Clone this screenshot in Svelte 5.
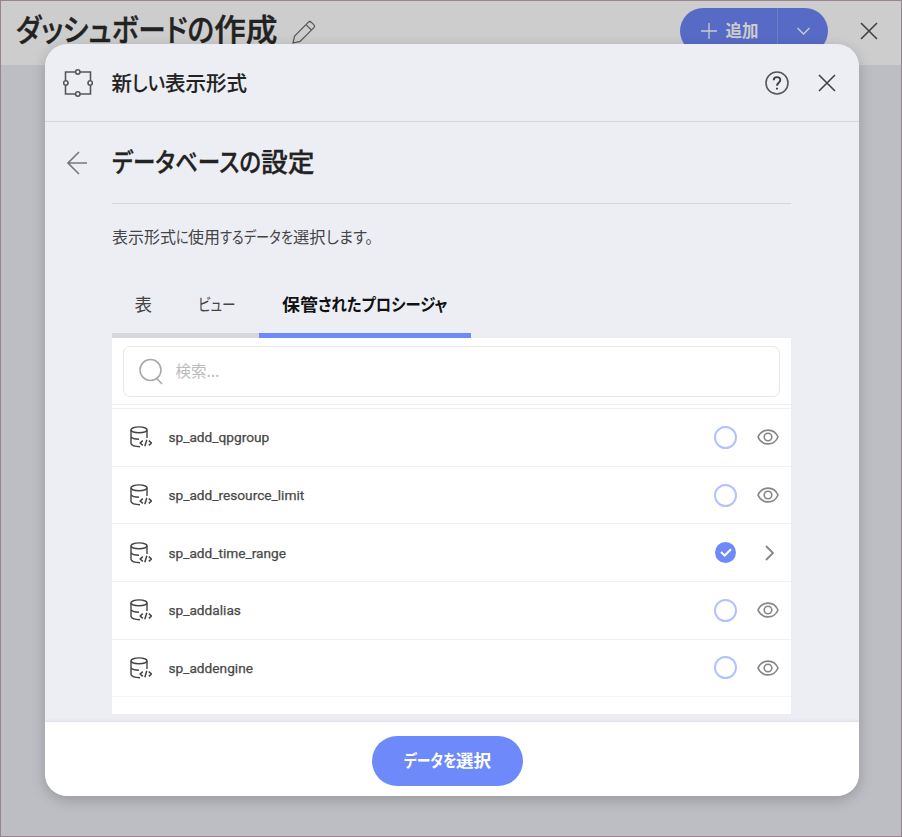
<script>
  const procedures = [
    { name: 'sp_add_qpgroup' },
    { name: 'sp_add_resource_limit' },
    { name: 'sp_add_time_range', selected: true },
    { name: 'sp_addalias' },
    { name: 'sp_addengine' }
  ];

  function fit(node, width) {
    const natural = node.getBoundingClientRect().width;
    node.style.transform = `scaleX(${width / natural})`;
    node.style.marginRight = `${width - natural}px`;
  }
</script>

{#snippet cross()}
  <svg width="18" height="18" viewBox="0 0 18 18"><path d="M1 1 17 17M17 1 1 17" /></svg>
{/snippet}

{#snippet label(runs)}
  <span class="label">{#each runs as [text, width]}<span class="run" use:fit={width}>{text}</span>{/each}</span>
{/snippet}

<div class="app">
  <header class="topbar">
    <h1>{@render label([['ダッシュボードの', 198], ['作成', 63.5]])}</h1>
    <svg class="pencil" width="24" height="24" viewBox="0 0 24 24"><path d="M1 23l1.600-7L16.200 2.300q1.600-1.600 3.200 0l2.300 2.300q1.600 1.600 0 3.200L8.100 21.400ZM14 4.600l5.400 5.400" /></svg>
    <div class="add">
      <button class="main">
        <svg width="16" height="16" viewBox="0 0 16 16"><path d="M8 0V16M0 8H16" /></svg>
        <span>追加</span>
      </button>
      <button class="more" aria-label="more">
        <svg width="13" height="8" viewBox="0 0 13 8"><path d="M.5 1 6.500 7 12.500 1" /></svg>
      </button>
    </div>
    <div class="close">{@render cross()}</div>
  </header>

  <section class="dialog">
    <header class="dialog-head">
      <svg class="shape" width="30" height="28" viewBox="0 0 30 28">
        <path d="M2.500 11.500V3H12.500M17 3H27.500V11.500M27.500 16.500V25H17M12.500 25H2.500V16.500" />
        <circle cx="14.800" cy="3" r="2.200" /><circle cx="14.800" cy="25" r="2.200" />
        <circle cx="2.800" cy="14" r="2.200" /><circle cx="27.200" cy="14" r="2.200" />
      </svg>
      <h2>{@render label([['新', 20.5], ['しい', 33], ['表示形式', 82]])}</h2>
      <svg class="help" width="24" height="24" viewBox="0 0 24 24">
        <circle cx="12" cy="12" r="11" />
        <path class="q" d="M8.700 9.300C8.700 5 15.300 5.200 15.300 9C15.300 11.700 12 11.700 12 14.700" />
        <path class="q" d="M12 16.700V18.500" />
      </svg>
      <div class="close">{@render cross()}</div>
    </header>

    <div class="body">
      <div class="heading">
        <svg width="20" height="24" viewBox="0 0 20 24"><path d="M12 1 1 12 12 23M1 12H20" /></svg>
        <h3>{@render label([['データベースの', 149], ['設定', 53.5]])}</h3>
      </div>
      <div class="content">
        <p>{@render label([['表示形式', 64], ['に', 12.7], ['使用', 32], ['するデータを', 73], ['選択', 32.5], ['します。', 47]])}</p>
        <nav>
          <div class="tab t1">{@render label([['表', 17.5]])}</div>
          <div class="tab t2">{@render label([['ビュー', 37.5]])}</div>
          <div class="tab active">{@render label([['保管', 36], ['されたプロシージャ', 129.5]])}</div>
        </nav>
        <div class="panel">
          <div class="search">
            <svg width="24" height="27" viewBox="0 0 24 27"><circle cx="11.500" cy="12" r="10.500" /><path d="M17.800 20.500 23 26" /></svg>
            <span>検索...</span>
          </div>
          <ul>
            {#each procedures as item}
              <li>
                <svg class="db" width="22" height="22" viewBox="0 0 22 22">
                  <ellipse cx="9" cy="3.800" rx="8" ry="2.900" />
                  <path d="M1 3.800V17.500Q2 20.500 10 20.700M17 3.800V12M1 10.700Q2.500 13.200 9 13.300" />
                  <path class="code" d="M12.800 14.600 10.200 17 12.800 19.400M18.800 14.600 21.400 17 18.800 19.400M16.800 13.800 14.800 20.200" />
                </svg>
                <span class="name">{item.name}</span>
                <span class="radio" class:selected={item.selected}>
                  {#if item.selected}
                    <svg width="12" height="9" viewBox="0 0 12 9"><path d="M1 4 4.700 7.500 11 1.200" /></svg>
                  {/if}
                </span>
                <span class="action">
                  {#if item.selected}
                    <svg class="next" width="9" height="16" viewBox="0 0 9 16"><path d="M1 1 8 8 1 15" /></svg>
                  {:else}
                    <svg width="22" height="16" viewBox="0 0 22 16"><path d="M1 8C5 -1.200 17 -1.200 21 8C17 17.200 5 17.200 1 8Z" /><circle cx="11" cy="8" r="3.800" /></svg>
                  {/if}
                </span>
              </li>
            {/each}
          </ul>
        </div>
      </div>
    </div>

    <footer>
      <button class="choose">{@render label([['データを', 52.5], ['選択', 35]])}</button>
    </footer>
  </section>
</div>

<style>
  * { box-sizing: border-box; }
  svg { display: block; flex: none; fill: none; stroke: currentColor; stroke-width: 1.600; }
  h1, h2, h3, p, ul { margin: 0; padding: 0; }
  button { border: 0; padding: 0; background: none; font: inherit; color: inherit; }
  .label { display: inline-block; white-space: nowrap; font-feature-settings: 'palt'; }
  .run { display: inline-block; transform-origin: 0 50%; }
  .app {
    position: relative; width: 902px; height: 837px; overflow: hidden;
    background: #bdbec3; border: 1px solid #9b8291; color: #222;
    font-family: 'Noto Sans CJK JP', sans-serif;
  }
  .topbar { height: 64px; display: flex; align-items: flex-start; background: #cdcdcd; padding-left: 15px; }
  h1 { width: 262px; font-size: 31px; line-height: 44px; font-weight: 500; padding-top: 5px; -webkit-text-stroke: .4px #222; }
  .pencil { margin: 19px 0 0 14px; color: #555; stroke-width: 1.200; }
  .add { display: flex; margin-left: auto; margin-top: 7px; width: 148px; height: 46px; border-radius: 23px; background: #576bc6; color: #ccc; }
  .main { width: 98px; border-right: 1px solid #7180bd; display: flex; align-items: center; padding-left: 20.500px; font-size: 16.500px; font-weight: 700; gap: 9px; }
  .main svg, .more svg { stroke-width: 1.300; }
  .main span { margin-top: -2px; }
  .more { width: 50px; display: flex; justify-content: center; align-items: center; }
  .topbar .close { margin: 21px 23px 0 32px; }
  .close { color: #404144; }
  .dialog {
    position: absolute; left: 43.500px; top: 43px; width: 814px; height: 752px;
    border-radius: 22px; overflow: hidden; background: #edeef4; display: flex; flex-direction: column;
    box-shadow: 0 4px 14px rgba(0,0,0,.2);
  }
  .dialog-head { height: 78px; flex: none; border-bottom: 1px solid #d5d6db; display: flex; align-items: center; padding: 0 22.500px 0 18.500px; }
  .shape, .help { color: #55565a; }
  h2 { margin: -2px 0 0 18.500px; font-size: 20.500px; font-weight: 500; line-height: 30px; -webkit-text-stroke: .15px #222; }
  .help { margin-left: auto; margin-right: 29.500px; }
  .q { stroke-width: 1.900; stroke: #3d3d40; }
  .body { flex: 1; padding: 0 67.500px 0 22.500px; }
  .heading { display: flex; align-items: center; height: 81px; color: #77787b; }
  h3 { margin-left: 24.500px; flex: 1; height: 82px; padding-top: 19px; border-bottom: 1px solid #d5d6db; font-size: 26.500px; line-height: 40px; font-weight: 500; color: #222; -webkit-text-stroke: .3px #222; }
  .content { margin-left: 44.500px; }
  p { padding-top: 21px; font-size: 16px; line-height: 24px; color: #444; }
  nav { display: flex; margin-top: 36px; height: 54px; font-size: 17.500px; line-height: 40px; color: #444; }
  .tab { border-bottom: 5px solid #d6d7dc; }
  .t1 { width: 64px; padding-left: 23px; }
  .t2 { width: 83px; padding-left: 22.500px; }
  .active { width: 212px; padding-left: 23px; border-color: #6e89fa; color: #111; font-weight: 700; }
  .panel { height: 376px; background: #fff; overflow: hidden; }
  .search { margin: 8px 11px 7px; height: 51px; border: 1.500px solid #e8e8e9; border-radius: 7px; display: flex; align-items: center; padding-left: 15px; gap: 13px; color: #aaa; font-size: 15.500px; }
  .search span { color: #bbb; margin-top: -3px; }
  ul { list-style: none; border-top: 1px solid #eef0f5; padding-top: 3px; }
  li { height: 57.700px; border-top: 1px solid #f0f1f7; display: flex; align-items: center; padding: 0 12px 0 18px; }
  li:last-child { height: 58.700px; padding-bottom: 1px; border-bottom: 1px solid #f4f5f9; }
  .db { color: #444; stroke-width: 1.400; }
  .code { stroke-width: 1.500; }
  .name { flex: 1; margin-left: 17px; font: 13.700px Roboto, sans-serif; color: #484848; -webkit-text-stroke: .25px #484848; }
  .radio { width: 23px; height: 23px; border: 2px solid #b3c1ff; border-radius: 50%; display: grid; place-items: center; }
  .selected { width: 21px; height: 21px; margin-right: 1px; background: #6e89fa; border: 0; color: #fff; }
  .selected svg { stroke-width: 2; }
  .action { width: 22px; margin-left: 20px; display: grid; place-items: center; color: #858585; }
  .next { margin-left: 3px; stroke-width: 1.800; }
  footer { height: 74px; flex: none; background: #fff; display: flex; justify-content: center; align-items: center; box-shadow: 0 -1px 3px rgba(100,110,140,.12); padding-top: 4px; padding-right: 8px; }
  .choose { width: 151px; height: 50px; padding-bottom: 3px; border-radius: 25px; background: #6e89fa; color: #fff; font-size: 17px; font-weight: 700; }
</style>
